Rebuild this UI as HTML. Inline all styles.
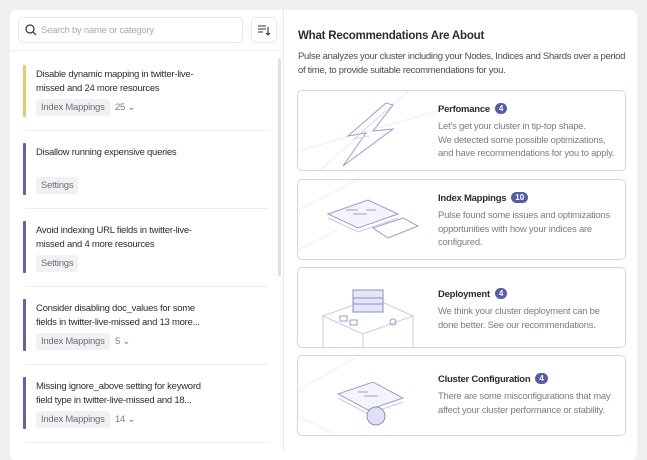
<!DOCTYPE html>
<html><head><meta charset="utf-8"><style>
*{box-sizing:border-box;margin:0;padding:0}
body{width:647px;height:450px;background:#eef0f2;font-family:"Liberation Sans",sans-serif;overflow:hidden;position:relative;letter-spacing:-0.25px}
.card{position:absolute;left:10px;top:10px;width:627px;height:450px;background:#fff;border-radius:6px}
.left{position:absolute;left:10px;top:10px;width:274px;height:440px;border-right:1px solid #e8e9ee}
.search{position:absolute;left:8px;top:7px;width:225px;height:26px;border:1px solid #e6e8ec;border-radius:5px;font-size:9.5px;color:#a5a9b1;padding:7px 0 0 22px}
.sort{position:absolute;left:241px;top:7px;width:26px;height:26px;border:1px solid #e6e8ec;border-radius:5px}
.hdrline{position:absolute;left:0;top:40px;width:274px;border-top:1px solid #eef0f2}
.scroll{position:absolute;left:268px;top:48px;width:3px;height:218px;background:#e0e0e0;border-radius:2px}
.item{position:absolute;left:23px;width:250px}
.bar{position:absolute;left:0;width:3px;border-radius:1px}
.t{position:absolute;left:13px;font-size:9.5px;line-height:13.5px;color:#2b2d33;white-space:nowrap}
.tag{position:absolute;left:13px;height:17px;background:#f0f1f3;border-radius:3px;font-size:9.5px;color:#6b6f77;padding:3px 5px}
.cnt{position:absolute;font-size:9.5px;color:#7a7e86}
.div{position:absolute;left:25px;width:243px;border-top:1px solid #eceef1}
h2{position:absolute;left:298px;top:30px;font-size:11.5px;color:#2b2d33;letter-spacing:-0.2px}
.desc{position:absolute;left:298px;top:50px;font-size:9.5px;line-height:13.5px;color:#4a4d55;white-space:nowrap;letter-spacing:-0.3px}
.rc{position:absolute;left:297px;width:329px;border:1px solid #d4d5e4;border-radius:5px;overflow:hidden}
.rc h3{position:absolute;left:140px;font-size:9.5px;color:#2b2d33}
.badge{display:inline-block;background:#565ca8;color:#fff;font-size:8px;border-radius:7px;padding:1px 4px;margin-left:5px;vertical-align:1px;letter-spacing:0}
.rc p{position:absolute;left:140px;font-size:9.5px;line-height:13.5px;color:#7a7d85;white-space:nowrap}
svg{position:absolute}
</style></head><body>
<div class="card"></div>
<div class="left">
 <div class="search">Search by name or category</div>
 <svg style="left:15px;top:14px" width="12" height="12" viewBox="0 0 12 12"><circle cx="5" cy="5" r="4" fill="none" stroke="#333" stroke-width="1.2"/><path d="M8 8l3 3" stroke="#333" stroke-width="1.2"/></svg>
 <div class="sort"><svg style="left:6px;top:7px" width="13" height="12" viewBox="0 0 13 12"><path d="M0 1h8M0 4h8M0 7h5M10 2v8M8 8l2 2 2-2" stroke="#333" fill="none" stroke-width="1.1"/></svg></div>
 <div class="hdrline"></div>
 <div class="scroll"></div>
</div>
<div class="item" style="top:65px"><div class="bar" style="top:0;height:52px;background:#e8c96a"></div>
 <div class="t" style="top:3px">Disable dynamic mapping in twitter-live-<br>missed and 24 more resources</div>
 <div class="tag" style="top:34px">Index Mappings</div><div class="cnt" style="left:92px;top:37px">25 ⌄</div></div>
<div class="div" style="top:130px"></div>
<div class="item" style="top:143px"><div class="bar" style="top:0;height:52px;background:#5f63a8"></div>
 <div class="t" style="top:3px">Disallow running expensive queries</div>
 <div class="tag" style="top:34px">Settings</div></div>
<div class="div" style="top:208px"></div>
<div class="item" style="top:221px"><div class="bar" style="top:0;height:52px;background:#5f63a8"></div>
 <div class="t" style="top:3px">Avoid indexing URL fields in twitter-live-<br>missed and 4 more resources</div>
 <div class="tag" style="top:34px">Settings</div></div>
<div class="div" style="top:286px"></div>
<div class="item" style="top:299px"><div class="bar" style="top:0;height:52px;background:#5f63a8"></div>
 <div class="t" style="top:3px">Consider disabling doc_values for some<br>fields in twitter-live-missed and 13 more...</div>
 <div class="tag" style="top:34px">Index Mappings</div><div class="cnt" style="left:92px;top:37px">5 ⌄</div></div>
<div class="div" style="top:364px"></div>
<div class="item" style="top:377px"><div class="bar" style="top:0;height:52px;background:#5f63a8"></div>
 <div class="t" style="top:3px">Missing ignore_above setting for keyword<br>field type in twitter-live-missed and 18...</div>
 <div class="tag" style="top:34px">Index Mappings</div><div class="cnt" style="left:92px;top:37px">14 ⌄</div></div>
<div class="div" style="top:442px"></div>

<h2>What Recommendations Are About</h2>
<div class="desc">Pulse analyzes your cluster including your Nodes, Indices and Shards over a period<br>of time, to provide suitable recommendations for you.</div>

<div class="rc" style="top:90px;height:81px">
 <svg width="140" height="81" viewBox="0 0 140 81"><path d="M0 60L140 20M20 81L110 0" stroke="#eeeef4" fill="none"/><path d="M88 12L50 45L68 42L45 75L95 38L75 40L95 14Z" fill="none" stroke="#9a9ed0"/><path d="M92 16L56 48L72 45" stroke="#d7d9ee" fill="none"/></svg>
 <h3 style="top:12px">Perfomance<span class="badge">4</span></h3>
 <p style="top:29px">Let’s get your cluster in tip-top shape.<br>We detected some possible optimizations,<br>and have recommendations for you to apply.</p></div>
<div class="rc" style="top:179px;height:81px">
 <svg width="140" height="81" viewBox="0 0 140 81"><path d="M0 30L60 0M0 70L40 50" stroke="#eeeef4" fill="none"/><path d="M30 34L70 20L100 34L60 48Z" fill="#f4f4fb" stroke="#9a9ed0"/><path d="M30 38L60 52L100 38" fill="none" stroke="#c8cae6"/><path d="M75 48L105 38L120 46L90 58Z" fill="#fff" stroke="#9a9ed0"/><path d="M48 30h12M55 34h14M68 30h10" stroke="#9a9ed0"/></svg>
 <h3 style="top:12px">Index Mappings<span class="badge">10</span></h3>
 <p style="top:29px">Pulse found some issues and optimizations<br>opportunities with how your indices are<br>configured.</p></div>
<div class="rc" style="top:267px;height:81px">
 <svg width="140" height="81" viewBox="0 0 140 81"><path d="M25 48L75 30L115 48L65 66Z M25 48V81 M115 48V81 M65 66V81" fill="none" stroke="#c8cae6"/><rect x="55" y="22" width="30" height="22" fill="#e4e5f5" stroke="#8a8ec8"/><path d="M55 30h30M55 36h30" stroke="#8a8ec8"/><rect x="42" y="48" width="7" height="5" fill="none" stroke="#9a9ed0"/><rect x="52" y="52" width="7" height="5" fill="none" stroke="#9a9ed0"/><circle cx="95" cy="54" r="3" fill="none" stroke="#9a9ed0"/></svg>
 <h3 style="top:20px">Deployment<span class="badge">4</span></h3>
 <p style="top:37px">We think your cluster deployment can be<br>done better. See our recommendations.</p></div>
<div class="rc" style="top:355px;height:81px">
 <svg width="140" height="81" viewBox="0 0 140 81"><path d="M0 35L60 0M0 60L40 80" stroke="#eeeef4" fill="none"/><path d="M40 38L75 26L105 42L70 54Z" fill="#f4f4fb" stroke="#9a9ed0"/><path d="M40 42L70 58L105 46" fill="none" stroke="#c8cae6"/><circle cx="78" cy="60" r="9" fill="#dfe0f3" stroke="#8a8ec8"/><path d="M60 36h10M66 40h14" stroke="#9a9ed0"/></svg>
 <h3 style="top:17px">Cluster Configuration<span class="badge">4</span></h3>
 <p style="top:34px">There are some misconfigurations that may<br>affect your cluster performance or stability.</p></div>
</body></html>
